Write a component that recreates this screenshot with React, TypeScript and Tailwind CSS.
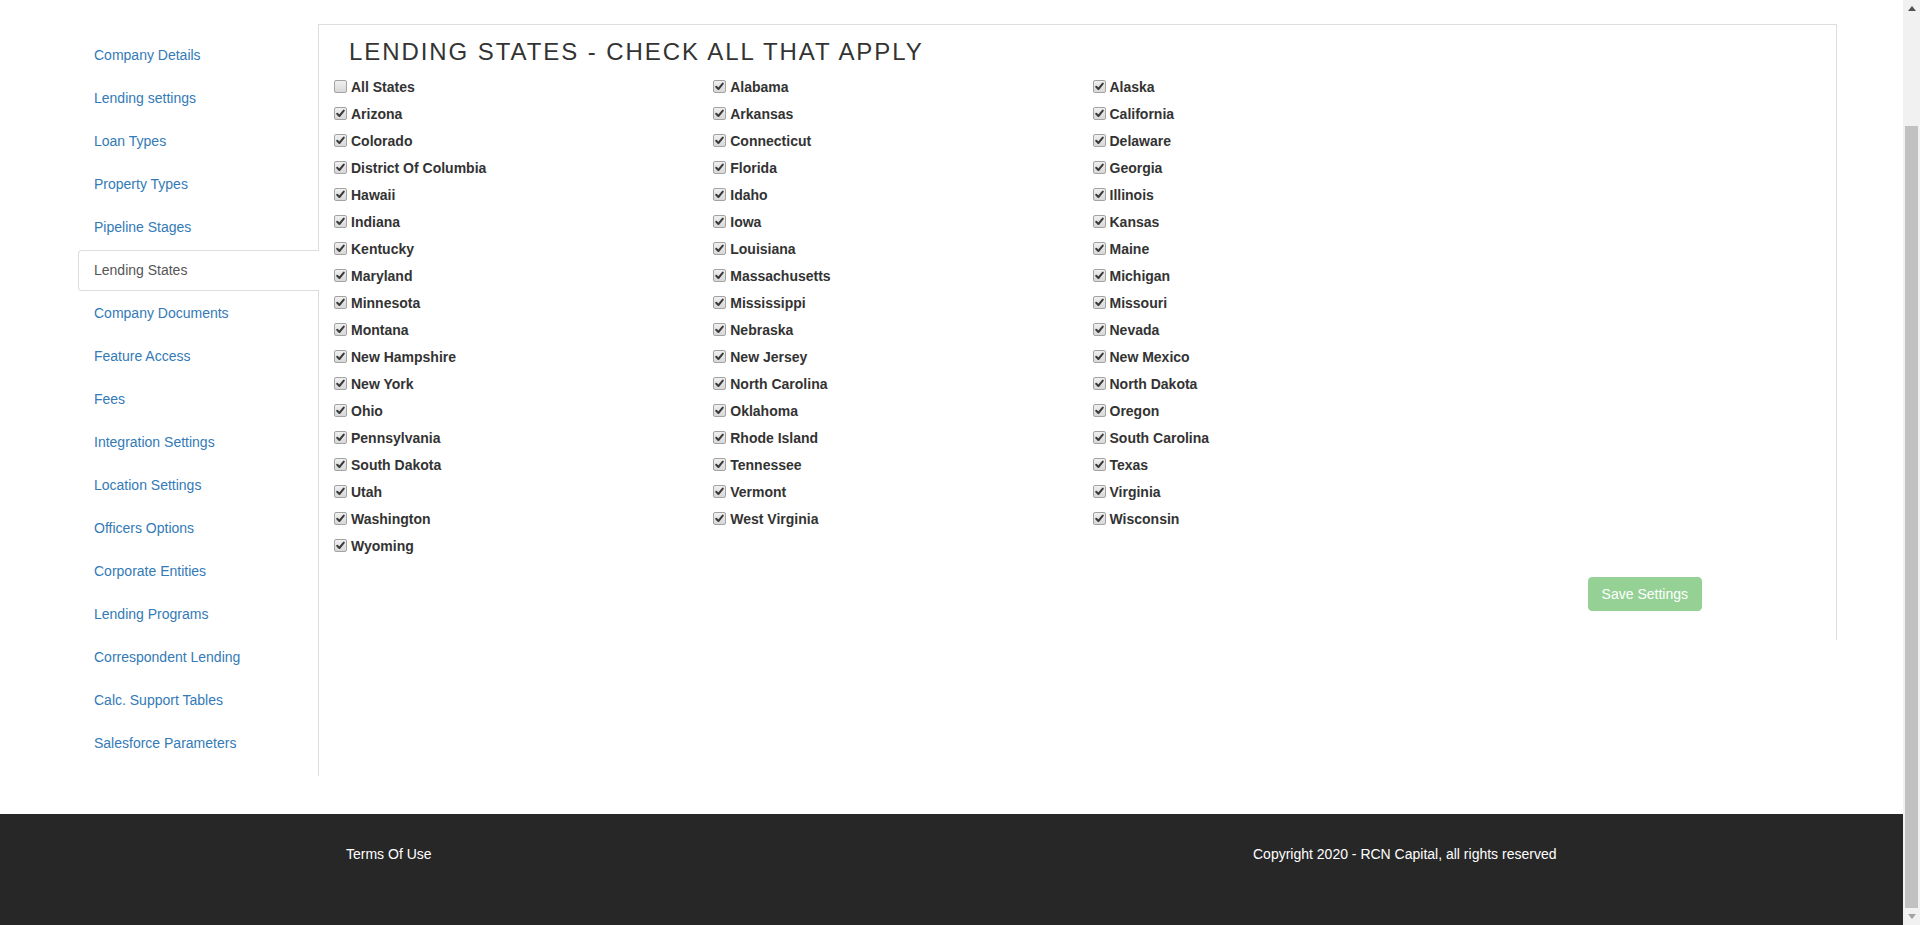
import React from 'react';

const navItems = [
  'Company Details',
  'Lending settings',
  'Loan Types',
  'Property Types',
  'Pipeline Stages',
  'Lending States',
  'Company Documents',
  'Feature Access',
  'Fees',
  'Integration Settings',
  'Location Settings',
  'Officers Options',
  'Corporate Entities',
  'Lending Programs',
  'Correspondent Lending',
  'Calc. Support Tables',
  'Salesforce Parameters',
];

const states = [
  'Alabama', 'Alaska', 'Arizona', 'Arkansas', 'California', 'Colorado', 'Connecticut', 'Delaware',
  'District Of Columbia', 'Florida', 'Georgia', 'Hawaii', 'Idaho', 'Illinois', 'Indiana', 'Iowa',
  'Kansas', 'Kentucky', 'Louisiana', 'Maine', 'Maryland', 'Massachusetts', 'Michigan', 'Minnesota',
  'Mississippi', 'Missouri', 'Montana', 'Nebraska', 'Nevada', 'New Hampshire', 'New Jersey',
  'New Mexico', 'New York', 'North Carolina', 'North Dakota', 'Ohio', 'Oklahoma', 'Oregon',
  'Pennsylvania', 'Rhode Island', 'South Carolina', 'South Dakota', 'Tennessee', 'Texas', 'Utah',
  'Vermont', 'Virginia', 'Washington', 'West Virginia', 'Wisconsin', 'Wyoming',
];

const CheckBox: React.FC<{ checked: boolean }> = ({ checked }) => (
  <span className="relative -top-[1px] mr-[4px] inline-flex h-[13px] w-[13px] shrink-0 items-center justify-center rounded-[2px] border border-[#a3a3a3] bg-gradient-to-b from-[#f0f0f0] to-[#d8d8d8]">
    {checked && (
      <svg width="11" height="11" viewBox="0 0 11 11">
        <path d="M2.2 5.8 L4.4 8 L8.8 2.6" fill="none" stroke="#3a3a3a" strokeWidth="2" strokeLinecap="round" strokeLinejoin="round" />
      </svg>
    )}
  </span>
);

const Sidebar: React.FC = () => (
  <div className="ml-[78px] w-[241px] shrink-0 border-r border-[#ddd] pt-[11px] pb-[10px]">
    {navItems.map((item) => {
      const active = item === 'Lending States';
      return (
        <div
          key={item}
          className={
            active
              ? 'mr-[-1px] mb-[2px] flex h-[41px] items-center rounded-l-[4px] border border-r-0 border-[#ddd] bg-white pl-[15px] text-[14px] text-[#555]'
              : 'mb-[2px] flex h-[41px] items-center border border-transparent pl-[15px] text-[14px] text-[#337ab7]'
          }
        >
          {item}
        </div>
      );
    })}
  </div>
);

const StatesPanel: React.FC = () => {
  const items = [{ name: 'All States', checked: false }, ...states.map((s) => ({ name: s, checked: true }))];
  return (
    <div className="w-[1518px] shrink-0 border-t border-r border-[#ddd] pb-[29px]">
      <h2 className="pt-[14px] pl-[30px] text-[24px] leading-[26px] tracking-[1.93px] text-[#333]">
        LENDING STATES - CHECK ALL THAT APPLY
      </h2>
      <div className="mt-[9px] grid w-3/4 grid-cols-3">
        {items.map((it) => (
          <label key={it.name} className="flex h-[27px] items-center pl-[15px] text-[14px] font-bold text-[#333]">
            <CheckBox checked={it.checked} />
            {it.name}
          </label>
        ))}
      </div>
      <div className="mt-[17px] flex justify-end pr-[134px]">
        <button className="h-[34px] rounded-[4px] border border-[#95d195] bg-[#95d195] px-[13px] text-[14px] text-white">
          Save Settings
        </button>
      </div>
    </div>
  );
};

const ScrollBar: React.FC = () => (
  <div className="flex h-[925px] w-[17px] shrink-0 flex-col bg-[#f1f1f1]">
    <div className="flex h-[17px] items-center justify-center">
      <svg width="8" height="5" viewBox="0 0 8 5">
        <path d="M0 5 L4 0 L8 5 Z" fill="#505050" />
      </svg>
    </div>
    <div className="h-[109px]" />
    <div className="mx-[2px] h-[782px] bg-[#c1c1c1]" />
    <div className="flex h-[17px] items-center justify-center">
      <svg width="8" height="5" viewBox="0 0 8 5">
        <path d="M0 0 L8 0 L4 5 Z" fill="#a3a3a3" />
      </svg>
    </div>
  </div>
);

const App: React.FC = () => {
  return (
    <div className="flex h-[925px] w-[1920px] overflow-hidden bg-white font-['Liberation_Sans',Arial,sans-serif]">
      <div className="flex w-[1903px] flex-col">
        <div className="h-[814px] shrink-0 pt-[24px]">
          <div className="flex items-start">
            <Sidebar />
            <StatesPanel />
          </div>
        </div>
        <footer className="flex flex-1 bg-[#272727] pt-[30px] text-[14px] leading-[20px] text-white">
          <div className="w-[1253px] pl-[346px]">Terms Of Use</div>
          <div>Copyright 2020 - RCN Capital, all rights reserved</div>
        </footer>
      </div>
      <ScrollBar />
    </div>
  );
};

export default App;
